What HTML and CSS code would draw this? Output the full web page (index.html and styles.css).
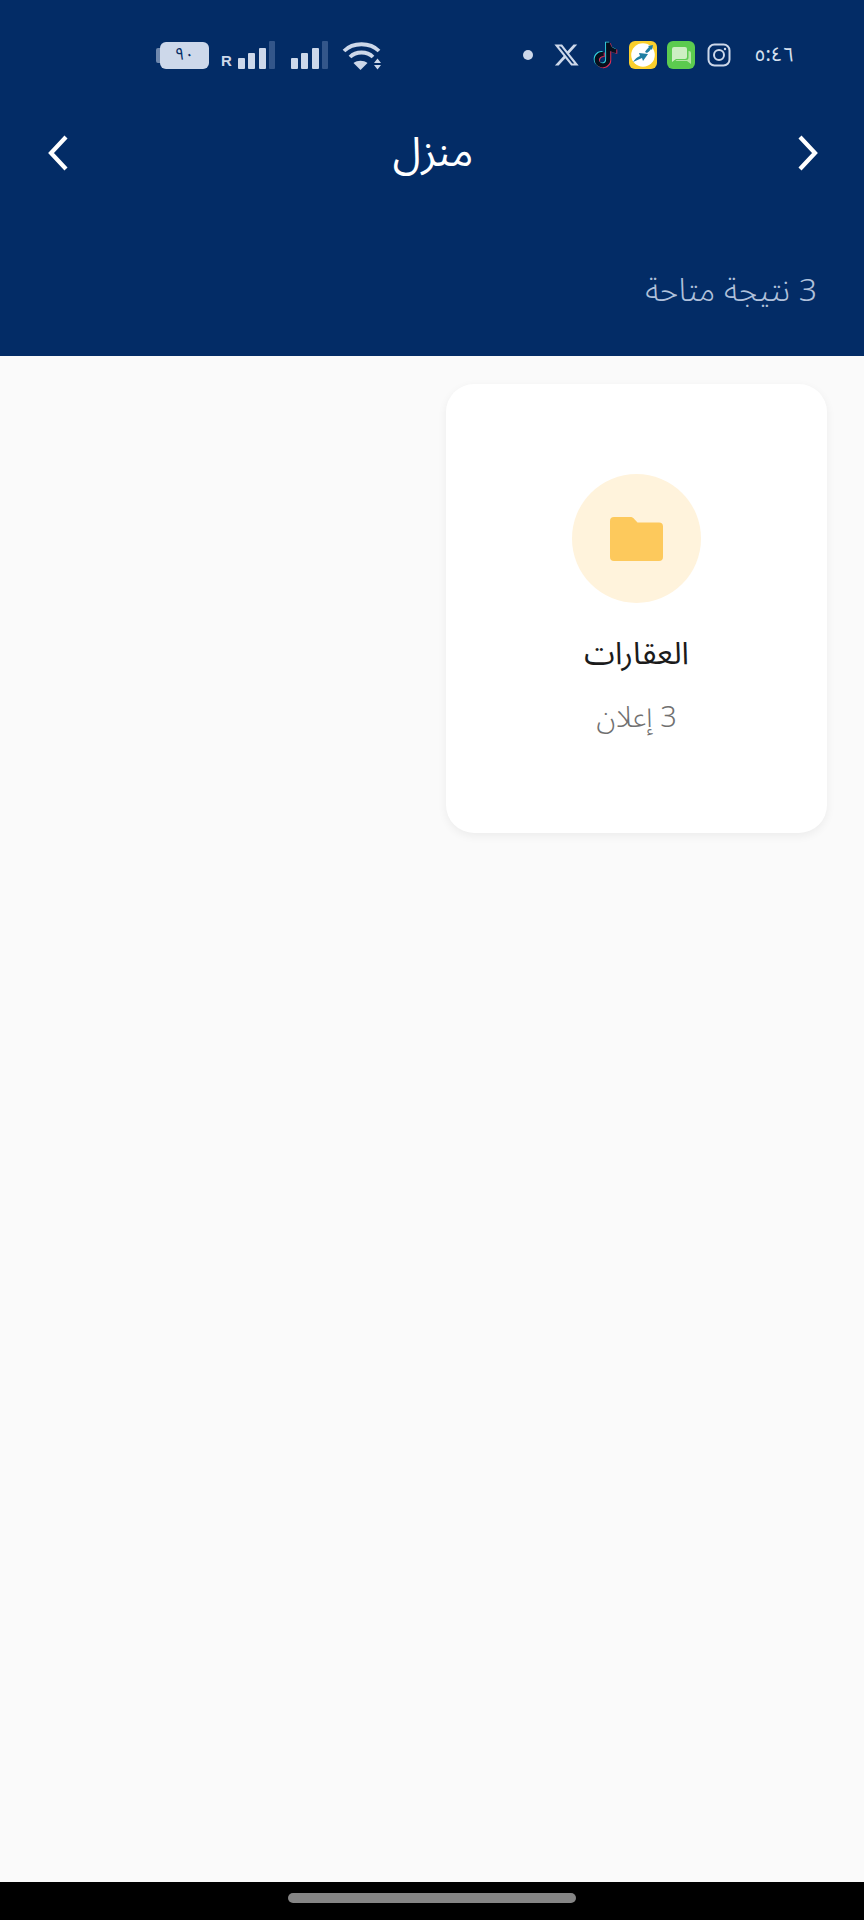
FILE: index.html
```html
<!DOCTYPE html>
<html lang="ar" dir="rtl">
<head>
    <meta charset="UTF-8">
    <meta name="viewport" content="width=device-width, initial-scale=1.0">
    <title>منزل</title>
    <link rel="stylesheet" href="styles.css">
</head>
<body>
    <header class="top">
        <div class="status">
            <div class="status-apps">
                <span class="clock">٥:٤٦</span>
                <svg class="ic-insta" viewBox="0 0 24 24" fill="none" stroke="#cdd8ea" stroke-width="2">
                    <rect x="1.500" y="1.500" width="21" height="21" rx="6"/>
                    <circle cx="12" cy="12" r="5"/>
                    <circle cx="18" cy="6" r="1.200" fill="#cdd8ea" stroke="none"/>
                </svg>
                <svg class="ic-app" viewBox="0 0 28 28">
                    <rect width="28" height="28" rx="6" fill="#5ccb4f"/>
                    <path d="M7 6h11a2 2 0 0 1 2 2v8a2 2 0 0 1-2 2H9l-4 3V8a2 2 0 0 1 2-2z" fill="#cdeec2"/>
                    <path d="M21.500 10H22a2 2 0 0 1 2 2v11l-4-3H10a2 2 0 0 1-1.500-1H19a2.500 2.500 0 0 0 2.500-2.500z" fill="#b4e6a6"/>
                </svg>
                <svg class="ic-app ic-app-wide" viewBox="0 0 28 28">
                    <rect width="28" height="28" rx="6" fill="#fbcf2c"/>
                    <circle cx="14" cy="14" r="11.800" fill="#fff"/>
                    <path d="M4 21c2-3 4-5 7-6l-1-3 9 1-5 7-1-3c-3 1-6 3-9 4z" fill="#1f7fa3"/>
                    <path d="M16 11c1-2 3-4 4-5l-1-1 5-1-1 5-1-1c-1 2-3 3-4 4z" fill="#1f7fa3"/>
                </svg>
                <svg class="ic-tiktok" viewBox="0 0 24 24">
                    <path fill="#e8315a" transform="translate(.9 .7)" d="M12.500 0h3.900c.1 1.500.6 3.100 1.800 4.200 1.100 1.100 2.700 1.600 4.200 1.800v4c-1.400-.1-2.900-.4-4.200-1-.6-.3-1.100-.6-1.600-.9v8.700c-.1 1.400-.5 2.800-1.400 3.900-1.300 1.900-3.600 3.200-5.900 3.200-1.400.1-2.900-.3-4.100-1-2-1.200-3.400-3.400-3.600-5.700v-1.500c.2-1.900 1.100-3.700 2.600-5 1.700-1.400 4-2.100 6.100-1.700v4.400c-1-.3-2.100-.2-3 .4-.6.4-1.100 1-1.400 1.700-.2.500-.1 1.100-.1 1.600.2 1.600 1.800 3 3.500 2.900 1.100 0 2.200-.7 2.800-1.600.2-.3.400-.7.400-1.100.1-1.800.1-3.600.1-5.400z"/>
                    <path fill="#35d6e0" transform="translate(-.9 -.7)" d="M12.500 0h3.900c.1 1.500.6 3.100 1.800 4.200 1.100 1.100 2.700 1.600 4.200 1.800v4c-1.400-.1-2.900-.4-4.200-1-.6-.3-1.100-.6-1.600-.9v8.700c-.1 1.400-.5 2.800-1.400 3.900-1.300 1.900-3.600 3.200-5.900 3.200-1.400.1-2.900-.3-4.100-1-2-1.200-3.400-3.400-3.600-5.700v-1.500c.2-1.900 1.100-3.700 2.600-5 1.700-1.400 4-2.100 6.100-1.700v4.400c-1-.3-2.100-.2-3 .4-.6.4-1.100 1-1.400 1.700-.2.500-.1 1.100-.1 1.600.2 1.600 1.800 3 3.500 2.900 1.100 0 2.200-.7 2.800-1.600.2-.3.400-.7.400-1.100.1-1.800.1-3.600.1-5.400z"/>
                    <path fill="#06101e" d="M12.500 0h3.900c.1 1.500.6 3.100 1.800 4.200 1.100 1.100 2.700 1.600 4.200 1.800v4c-1.400-.1-2.900-.4-4.200-1-.6-.3-1.100-.6-1.600-.9v8.700c-.1 1.400-.5 2.800-1.400 3.900-1.300 1.900-3.600 3.200-5.900 3.200-1.400.1-2.900-.3-4.100-1-2-1.200-3.400-3.400-3.600-5.700v-1.500c.2-1.900 1.100-3.700 2.600-5 1.700-1.400 4-2.100 6.100-1.700v4.400c-1-.3-2.100-.2-3 .4-.6.4-1.100 1-1.400 1.700-.2.500-.1 1.100-.1 1.600.2 1.600 1.800 3 3.500 2.900 1.100 0 2.200-.7 2.800-1.600.2-.3.400-.7.400-1.100.1-1.800.1-3.600.1-5.400z"/>
                </svg>
                <svg class="ic-x" viewBox="0 0 24 24" preserveAspectRatio="none">
                    <path fill="#cdd8ea" d="M18.244 2.250h3.308l-7.227 8.260 8.502 11.240H16.170l-5.214-6.817L4.990 21.750H1.680l7.730-8.835L1.254 2.250H8.080l4.713 6.231zm-1.161 17.520h1.833L7.084 4.126H5.117z"/>
                </svg>
                <span class="dot"></span>
            </div>
            <div class="status-sys">
                <div class="battery">
                    <span class="battery-nub"></span>
                    <span class="battery-body">٩٠</span>
                </div>
                <span class="roam">R</span>
                <div class="signal">
                    <i class="bar bar-1"></i><i class="bar bar-2"></i><i class="bar bar-3"></i><i class="bar bar-4 bar-off"></i>
                </div>
                <div class="signal signal-second">
                    <i class="bar bar-1"></i><i class="bar bar-2"></i><i class="bar bar-3"></i><i class="bar bar-4 bar-off"></i>
                </div>
                <svg class="ic-wifi" viewBox="0 0 40 30" fill="none" stroke="#cdd8ea" stroke-width="3.800">
                    <path d="M2 11C11 2 28 2 37 11"/>
                    <path d="M8 17C14 11 25 11 31 17"/>
                    <path d="M18.500 30l-7-7c4-3 10-3 14 0z" fill="#cdd8ea" stroke="none"/>
                    <path d="M32 23l3.500-4.500L39 23zM32 25h7l-3.500 4.500z" fill="#cdd8ea" stroke="none"/>
                </svg>
            </div>
        </div>

        <div class="toolbar">
            <svg class="chev" viewBox="0 0 24 36" fill="none" stroke="#fff" stroke-width="4.200">
                <path d="M4 2l15 16L4 34"/>
            </svg>
            <h1 class="title">منزل</h1>
            <svg class="chev" viewBox="0 0 24 36" fill="none" stroke="#fff" stroke-width="4.200">
                <path d="M20 2L5 18l15 16"/>
            </svg>
        </div>

        <p class="results">3 نتيجة متاحة</p>
    </header>

    <main class="content">
        <div class="grid">
            <div class="card">
                <div class="card-icon">
                    <svg viewBox="0 0 53 44" width="53" height="44">
                        <path fill="#fdc95c" d="M4 0h16c2 0 3 .6 4.200 2l3.300 3.500H49a4 4 0 0 1 4 4V40a4 4 0 0 1-4 4H4a4 4 0 0 1-4-4V4a4 4 0 0 1 4-4z"/>
                    </svg>
                </div>
                <h2 class="card-title">العقارات</h2>
                <p class="card-count">3 إعلان</p>
            </div>
        </div>
    </main>

    <footer class="navbar"><span class="pill"></span></footer>
</body>
</html>
```

FILE: styles.css
```css
* { box-sizing: border-box; }
html, body { height: 100%; }
body { margin: 0; height: 1920px; display: flex; flex-direction: column; background-color: #fafafa; font-family: "Noto Sans Arabic", "DejaVu Sans", sans-serif; overflow: hidden; }

.top { height: 356px; background-color: #032c66; color: #fff; padding-top: 40px; flex-shrink: 0; }

.status { height: 30px; padding: 0 70px 0 156px; display: flex; justify-content: space-between; align-items: center; }
.status-apps { display: flex; align-items: center; }
.status-sys { display: flex; align-items: center; direction: ltr; }

.clock { width: 40px; margin-left: 23px; font-size: 20px; color: #d6e0ef; text-align: center; white-space: nowrap; }
.ic-insta { width: 24px; height: 24px; margin-left: 12px; }
.ic-app { width: 28px; height: 28px; margin-left: 10px; }
.ic-app-wide { margin-left: 11px; }
.ic-tiktok { width: 25px; height: 28px; margin-left: 13px; }
.ic-x { width: 27px; height: 26px; margin-left: 20px; }
.dot { width: 10px; height: 10px; border-radius: 50%; background-color: #cdd8ea; }

.battery { width: 53px; height: 27px; display: flex; align-items: center; }
.battery-nub { width: 4px; height: 15px; border-radius: 2px 0 0 2px; background-color: #6f88ad; }
.battery-body { flex: 1; height: 27px; border-radius: 6px; background-color: #cdd8ea; color: #032c66; font-size: 17px; line-height: 27px; text-align: center; }
.roam { width: 11px; margin: 10px 6px 0 12px; font: bold 15px "Liberation Sans", sans-serif; color: #cdd8ea; }
.signal { width: 37px; height: 30px; padding-bottom: 1px; display: flex; align-items: flex-end; justify-content: space-between; }
.signal-second { margin-left: 16px; }
.bar { width: 7px; border-radius: 1px; background-color: #cdd8ea; display: block; }
.bar-1 { height: 11px; }
.bar-2 { height: 16px; }
.bar-3 { height: 21px; }
.bar-4 { width: 6px; height: 28px; }
.bar-off { background-color: #33568a; }
.ic-wifi { width: 40px; height: 30px; margin-left: 14px; }

.toolbar { height: 80px; margin-top: 43px; padding: 0 44px 0 46px; display: flex; align-items: center; justify-content: space-between; }
.chev { width: 24px; height: 36px; }
.title { margin: 0; font-size: 41px; font-weight: 400; color: #fff; }

.results { margin: 78px 47px 0 0; font-size: 32px; font-weight: 300; line-height: 40px; color: #b0c1db; }

.content { flex: 1; padding: 28px 37px; }
.grid { display: grid; grid-template-columns: 1fr 1fr; gap: 28px; }
.card { height: 449px; padding-top: 90px; border-radius: 28px; background-color: #fff; box-shadow: 0 3px 10px rgba(0, 0, 0, 0.06); display: flex; flex-direction: column; align-items: center; }
.card-icon { width: 129px; height: 129px; border-radius: 50%; background-color: #fff3dc; display: flex; align-items: center; justify-content: center; }
.card-title { margin: 31px 0 0; font-size: 31px; line-height: 40px; font-weight: 400; color: #1b1b1b; }
.card-count { margin: 24px 0 0; font-size: 29px; font-weight: 300; line-height: 40px; color: #707070; }

.navbar { height: 38px; flex-shrink: 0; background-color: #000; display: flex; justify-content: center; padding-top: 11px; }
.pill { width: 288px; height: 10px; border-radius: 5px; background-color: #858585; }
```
